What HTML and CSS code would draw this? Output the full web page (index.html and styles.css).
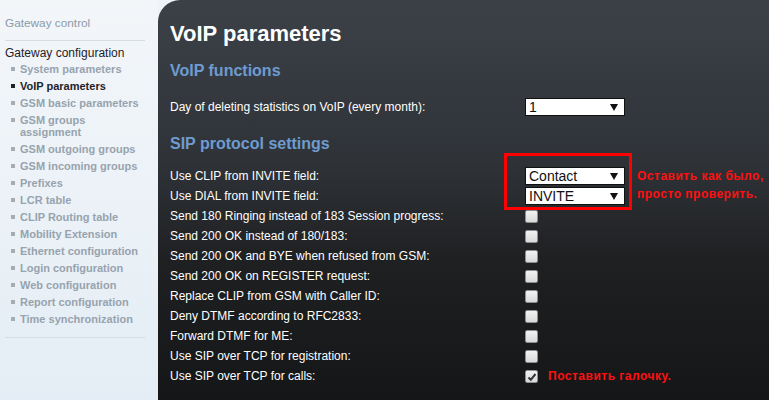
FILE: index.html
```html
<!DOCTYPE html>
<html>
<head>
<meta charset="utf-8">
<link rel="stylesheet" href="styles.css">
</head>
<body>
<div class="page">
  <aside class="sidebar">
    <div class="side-top">Gateway control</div>
    <div class="sep"></div>
    <div class="side-head">Gateway configuration</div>
    <ul class="menu">
      <li>System parameters</li>
      <li class="active">VoIP parameters</li>
      <li>GSM basic parameters</li>
      <li>GSM groups<br>assignment</li>
      <li>GSM outgoing groups</li>
      <li>GSM incoming groups</li>
      <li>Prefixes</li>
      <li>LCR table</li>
      <li>CLIP Routing table</li>
      <li>Mobility Extension</li>
      <li>Ethernet configuration</li>
      <li>Login configuration</li>
      <li>Web configuration</li>
      <li>Report configuration</li>
      <li>Time synchronization</li>
    </ul>
    <div class="sep sep-bottom"></div>
  </aside>
  <main class="content">
    <h1 class="title">VoIP parameters</h1>
    <h2 class="section">VoIP functions</h2>
    <div class="row row-first">
      <span class="label">Day of deleting statistics on VoIP (every month):</span>
      <div class="ctrl"><div class="select"><span>1</span><span class="arrow"></span></div></div>
    </div>
    <h2 class="section section-sip">SIP protocol settings</h2>
    <div class="sip">
      <div class="highlight"></div>
      <div class="note note-top">Оставить как было,<br>просто проверить.</div>
      <div class="row"><span class="label">Use CLIP from INVITE field:</span><div class="ctrl"><div class="select"><span>Contact</span><span class="arrow"></span></div></div></div>
      <div class="row"><span class="label">Use DIAL from INVITE field:</span><div class="ctrl"><div class="select"><span>INVITE</span><span class="arrow"></span></div></div></div>
      <div class="row"><span class="label">Send 180 Ringing instead of 183 Session progress:</span><div class="ctrl"><span class="cb"></span></div></div>
      <div class="row"><span class="label">Send 200 OK instead of 180/183:</span><div class="ctrl"><span class="cb"></span></div></div>
      <div class="row"><span class="label">Send 200 OK and BYE when refused from GSM:</span><div class="ctrl"><span class="cb"></span></div></div>
      <div class="row"><span class="label">Send 200 OK on REGISTER request:</span><div class="ctrl"><span class="cb"></span></div></div>
      <div class="row"><span class="label">Replace CLIP from GSM with Caller ID:</span><div class="ctrl"><span class="cb"></span></div></div>
      <div class="row"><span class="label">Deny DTMF according to RFC2833:</span><div class="ctrl"><span class="cb"></span></div></div>
      <div class="row"><span class="label">Forward DTMF for ME:</span><div class="ctrl"><span class="cb"></span></div></div>
      <div class="row"><span class="label">Use SIP over TCP for registration:</span><div class="ctrl"><span class="cb"></span></div></div>
      <div class="row"><span class="label">Use SIP over TCP for calls:</span><div class="ctrl"><span class="cb checked"><svg width="10" height="10" viewBox="0 0 10 10"><path d="M1.5 5.5 L3.8 7.8 L8.5 2" fill="none" stroke="#333" stroke-width="2"/></svg></span><span class="note note-inline">Поставить галочку.</span></div></div>
    </div>
  </main>
</div>
</body>
</html>
```
FILE: styles.css
```css
html, body {
  margin: 0;
  padding: 0;
  height: 100%;
  overflow: hidden;
}
body {
  font-family: "Liberation Sans", Arial, sans-serif;
  background: #eef3f7;
}
.page {
  display: flex;
  width: 769px;
  height: 400px;
}
.sidebar {
  width: 158px;
  flex: none;
  background: linear-gradient(180deg, #f3f6f9 0%, #eaf1f7 60%, #e4edf5 100%);
  padding-top: 16px;
  box-sizing: border-box;
}
.side-top {
  font-size: 11.8px;
  color: #8c9aa8;
  padding-left: 5px;
  line-height: 14px;
}
.sep {
  height: 1px;
  background: #d6dde3;
  margin: 10px 13px 0 5px;
}
.side-head {
  font-size: 12px;
  color: #1e2328;
  padding-left: 5px;
  margin-top: 5px;
  line-height: 14px;
}
.menu {
  list-style: none;
  margin: 3px 0 0 0;
  padding: 0 0 0 20px;
}
.menu li {
  position: relative;
  font-size: 11px;
  font-weight: bold;
  color: #97a3ae;
  line-height: 12px;
  margin-bottom: 5px;
}
.menu li::before {
  content: "";
  position: absolute;
  left: -9px;
  top: 4px;
  width: 4px;
  height: 4px;
  background: #a3adb6;
}
.menu li.active {
  color: #1e2328;
}
.menu li.active::before {
  background: #1e2328;
}
.sep-bottom {
  margin-top: 12px;
}
.content {
  flex: 1;
  background: linear-gradient(180deg, #3c4148 0%, #2f3338 40%, #1f2022 65%, #151617 100%);
  border-top-left-radius: 22px;
  padding: 21px 0 0 12px;
  color: #ffffff;
}
.title {
  margin: 0;
  font-size: 22px;
  font-weight: bold;
  line-height: 26px;
}
.section {
  margin: 14px 0 0 0;
  font-size: 16px;
  font-weight: bold;
  color: #6e9bd0;
  line-height: 20px;
}
.section-sip {
  margin-top: 17px;
}
.row {
  display: flex;
  align-items: center;
  height: 20px;
  font-size: 12px;
}
.row-first {
  margin-top: 16px;
}
.sip {
  position: relative;
  margin-top: 12px;
}
.label {
  width: 355px;
  flex: none;
}
.ctrl {
  display: flex;
  align-items: center;
}
.select {
  width: 95px;
  height: 16px;
  background: #fff;
  border: 1px solid #111;
  display: flex;
  align-items: center;
  justify-content: space-between;
  color: #111;
  font-size: 14px;
  padding-left: 3px;
  box-sizing: content-box;
}
.select span:first-child {
  line-height: 16px;
}
.arrow {
  width: 0;
  height: 0;
  border-left: 4px solid transparent;
  border-right: 4px solid transparent;
  border-top: 7px solid #111;
  margin-right: 6px;
}
.cb {
  width: 11px;
  height: 11px;
  background: linear-gradient(180deg, #f2f2f2 0%, #d9d9d9 100%);
  border: 1px solid #8f8f8f;
  border-radius: 2px;
  display: flex;
  align-items: center;
  justify-content: center;
  margin-top: 1px;
}
.highlight {
  position: absolute;
  left: 334px;
  top: -13px;
  width: 122px;
  height: 51px;
  border: 3px solid #ff0000;
}
.note {
  color: #ff1010;
  font-family: "Liberation Sans", Arial, sans-serif;
  font-weight: bold;
  font-size: 12px;
  letter-spacing: 0.5px;
  line-height: 18px;
  white-space: nowrap;
}
.note-top {
  position: absolute;
  left: 467px;
  top: 1px;
}
.note-inline {
  margin-left: 10px;
}
```
